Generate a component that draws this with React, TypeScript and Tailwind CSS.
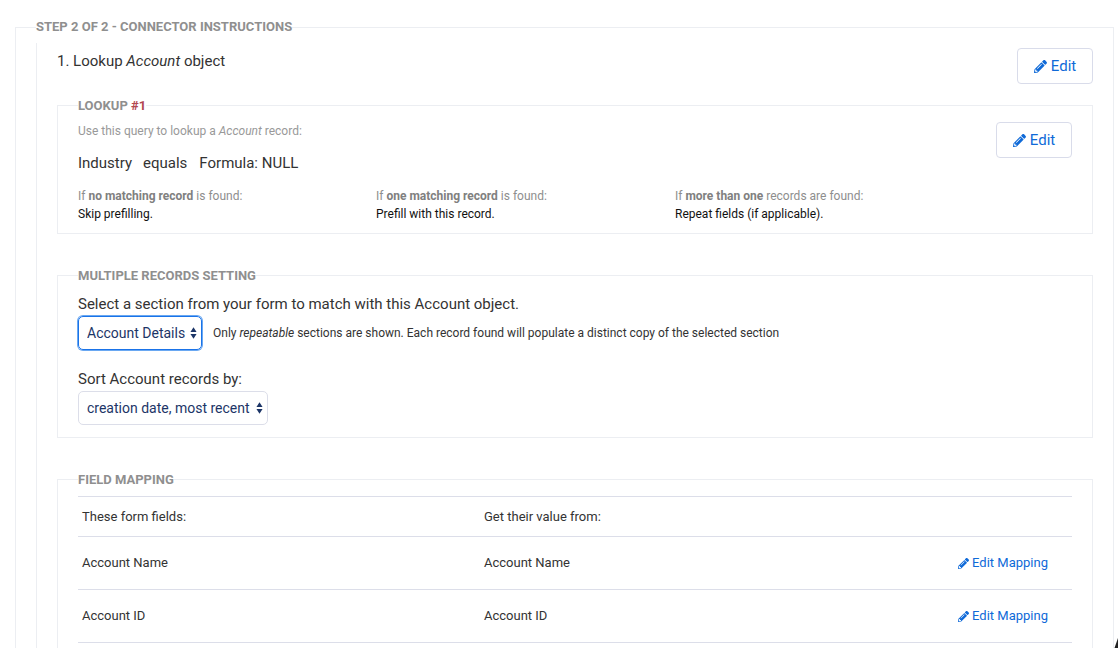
import React from "react";

function Pencil({ className }: { className?: string }) {
  return (
    <svg viewBox="0 0 512 512" className={className} fill="currentColor" aria-hidden="true">
      <path d="M497.9 142.1l-46.1 46.1c-4.7 4.7-12.3 4.7-17 0l-111-111c-4.7-4.7-4.7-12.3 0-17l46.1-46.1c18.7-18.7 49.1-18.7 67.9 0l60.1 60.1c18.8 18.7 18.8 49.1 0 67.9zM284.2 99.8L21.6 362.4.4 483.9c-2.9 16.4 11.4 30.6 27.8 27.8l121.5-21.3 262.6-262.6c4.7-4.7 4.7-12.3 0-17l-111-111c-4.8-4.7-12.4-4.7-17.1 0zM124.1 339.9c-5.5-5.5-5.5-14.3 0-19.8l154-154c5.5-5.5 14.3-5.5 19.8 0s5.5 14.3 0 19.8l-154 154c-5.5 5.5-14.3 5.5-19.8 0zM88 424h48v36.3l-64.5 11.3-31.1-31.1L51.7 376H88v48z" />
    </svg>
  );
}

function EditButton() {
  return (
    <button className="flex h-[36px] w-[76px] items-center justify-center gap-[4px] rounded-[4px] border border-[#d9dcea] bg-white text-[15px] text-[#0f6ad8]">
      <Pencil className="h-[13px] w-[13px]" />
      Edit
    </button>
  );
}

function Arrows() {
  return (
    <svg viewBox="0 0 8 14" className="pointer-events-none absolute top-1/2 right-[5px] h-[13px] w-[7px] -translate-y-1/2" fill="#1c3567" aria-hidden="true">
      <path d="M4 0.5 L7.5 5.8 H0.5 Z M4 13.5 L0.5 8.2 H7.5 Z" />
    </svg>
  );
}

function Panel({ legend, className, children }: { legend: React.ReactNode; className?: string; children: React.ReactNode }) {
  return (
    <fieldset className={`min-w-0 border border-[#eceef2] px-[20px] ${className ?? ""}`}>
      <legend className="text-[13px] leading-[14px] font-bold text-[#8f8f8f]">
        <span className="inline-block translate-y-[1px]">{legend}</span>
      </legend>
      {children}
    </fieldset>
  );
}

function Outcome({ pre, bold, post, result, className }: { pre: string; bold: string; post: string; result: string; className: string }) {
  return (
    <div className={className}>
      <p className="text-[12px] leading-[18px] text-[#8e8e8e]">
        {pre} <b className="font-bold text-[#808080]">{bold}</b> {post}
      </p>
      <p className="text-[12px] leading-[18px] text-[#111]">{result}</p>
    </div>
  );
}

function MapRow({ left, right }: { left: string; right: string }) {
  return (
    <div className="flex h-[53px] items-center border-b border-[#dcdee9] text-[13px] text-[#333]">
      <div className="w-[406px] pl-[4px]">{left}</div>
      <div className="flex-1">{right}</div>
      <a className="mr-[24px] flex items-center gap-[3px] text-[13px] text-[#0f6ad8]">
        <Pencil className="h-[11px] w-[11px]" />
        Edit Mapping
      </a>
    </div>
  );
}

export default function App() {
  return (
    <div className="relative h-[648px] overflow-hidden bg-white font-['Roboto',sans-serif]">
      <div className="pt-[20px] pr-[4px] pl-[15px]">
        <fieldset className="min-w-0 border border-[#eceef2] pl-[20px]">
          <legend className="text-[13px] leading-[14px] font-bold text-[#8f8f8f]">
            STEP 2 OF 2 - CONNECTOR INSTRUCTIONS
          </legend>
          <div className="mt-[9px] border-l border-[#eceef2] pt-[3px] pr-[20px] pl-[20px]">
            <div className="flex items-start justify-between pt-[2px]">
              <h2 className="pt-[3px] text-[15px] leading-[20px] text-[#333]">
                1. Lookup <i>Account</i> object
              </h2>
              <EditButton />
            </div>

            <Panel legend={<>LOOKUP <span className="text-[#b2474f]">#1</span></>} className="mt-[14px] h-[136px]">
              <div className="flex items-start justify-between">
                <div>
                  <p className="pt-[11px] text-[12px] leading-[16px] text-[#999]">
                    Use this query to lookup a <i>Account</i> record:
                  </p>
                  <p className="mt-[15px] text-[15px] leading-[18px] text-[#333]">
                    Industry<span className="ml-[11px]">equals</span><span className="ml-[12px]">Formula: NULL</span>
                  </p>
                </div>
                <div className="mt-[10px]">
                  <EditButton />
                </div>
              </div>
              <div className="mt-[15px] flex">
                <Outcome className="w-[298px]" pre="If" bold="no matching record" post="is found:" result="Skip prefilling." />
                <Outcome className="w-[299px]" pre="If" bold="one matching record" post="is found:" result="Prefill with this record." />
                <Outcome className="flex-1" pre="If" bold="more than one" post="records are found:" result="Repeat fields (if applicable)." />
              </div>
            </Panel>

            <Panel legend="MULTIPLE RECORDS SETTING" className="mt-[34px] h-[170px]">
              <p className="pt-[12px] text-[15px] leading-[20px] text-[#333]">
                Select a section from your form to match with this Account object.
              </p>
              <div className="mt-[2px] flex items-center">
                <div className="relative">
                  <select className="h-[34px] w-[124px] appearance-none rounded-[5px] border border-[#1a73e8] pl-[8px] text-[14px] text-[#1c3567] shadow-[0_0_0_1px_#6aa8f2] outline-none">
                    <option>Account Details</option>
                  </select>
                  <Arrows />
                </div>
                <p className="ml-[11px] text-[12px] text-[#333]">
                  Only <i>repeatable</i> sections are shown. Each record found will populate a distinct copy of the selected section
                </p>
              </div>
              <p className="mt-[19px] text-[15px] leading-[20px] text-[#333]">Sort Account records by:</p>
              <div className="relative mt-[2px] w-[190px]">
                <select className="h-[34px] w-full appearance-none rounded-[5px] border border-[#dcdee9] pl-[8px] text-[14px] text-[#1c3567] outline-none">
                  <option>creation date, most recent</option>
                </select>
                <Arrows />
              </div>
            </Panel>

            <Panel legend="FIELD MAPPING" className="mt-[34px] pb-[20px]">
              <div className="mt-[10px] flex h-[41px] items-center border-y border-[#dcdee9] text-[13px] text-[#333]">
                <div className="w-[406px] pl-[4px]">These form fields:</div>
                <div>Get their value from:</div>
              </div>
              <MapRow left="Account Name" right="Account Name" />
              <MapRow left="Account ID" right="Account ID" />
            </Panel>
          </div>
        </fieldset>
      </div>
      <svg viewBox="0 0 4 10" className="absolute right-0 bottom-0 h-[10px] w-[4px]" fill="#222" aria-hidden="true">
        <path d="M4 0 V10 H0.5 Z" />
      </svg>
    </div>
  );
}
